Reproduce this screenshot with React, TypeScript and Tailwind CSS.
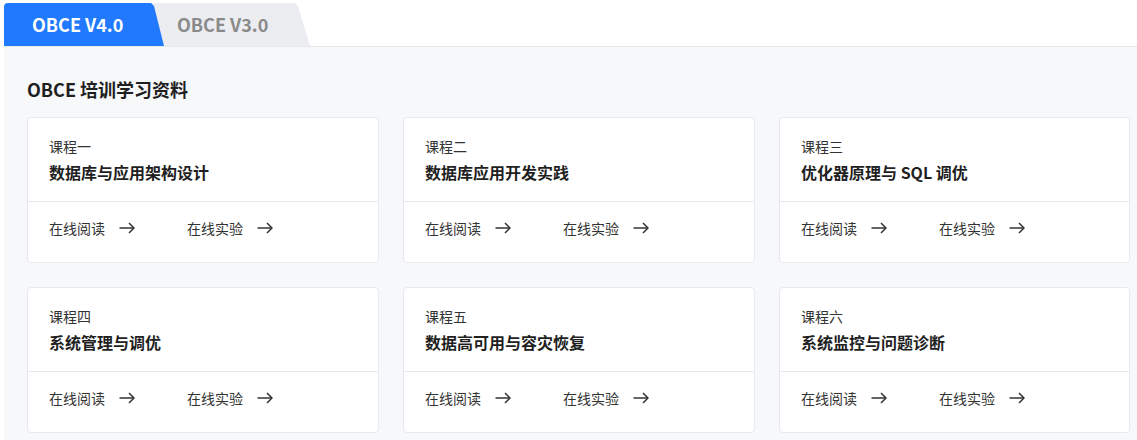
import React from 'react';

const FONT = '"Noto Sans CJK SC", "Noto Sans", sans-serif';

interface Course {
  no: string;
  title: string;
}

const COURSES: Course[] = [
  { no: '课程一', title: '数据库与应用架构设计' },
  { no: '课程二', title: '数据库应用开发实践' },
  { no: '课程三', title: '优化器原理与 SQL 调优' },
  { no: '课程四', title: '系统管理与调优' },
  { no: '课程五', title: '数据高可用与容灾恢复' },
  { no: '课程六', title: '系统监控与问题诊断' },
];

function Arrow() {
  return (
    <svg width="16" height="12" viewBox="0 0 16 12" fill="none" className="shrink-0">
      <path d="M0.5 6H15" stroke="#333" strokeWidth="1.5" />
      <path d="M10 1L15 6L10 11" stroke="#333" strokeWidth="1.5" strokeLinejoin="miter" />
    </svg>
  );
}

function CourseCard({ course }: { course: Course }) {
  return (
    <div className="h-[146px] rounded-[4px] border border-[#e8e9ee] bg-white flex flex-col">
      {/* Card head */}
      <div className="h-[84px] border-b border-[#e8e9ee] pl-[21px] pt-[18px]">
        <div className="text-[14px] leading-[20px] text-[#333]">{course.no}</div>
        <div className="mt-[4px] text-[16px] leading-[24px] font-bold text-[#1f1f1f]">{course.title}</div>
      </div>
      {/* Card links */}
      <div className="flex items-center pl-[21px] pt-[16px] text-[14px] leading-[20px] text-[#333]">
        <a className="flex items-center gap-[14px] w-[138px]">
          <span>在线阅读</span>
          <Arrow />
        </a>
        <a className="flex items-center gap-[14px]">
          <span>在线实验</span>
          <Arrow />
        </a>
      </div>
    </div>
  );
}

export default function App() {
  return (
    <div className="w-[1137px] h-[440px] overflow-hidden bg-white pt-[3px] pl-[4px]" style={{ fontFamily: FONT }}>
      {/* Tabs */}
      <div className="flex h-[43px]">
        <div className="relative z-10 w-[160px] rounded-tl-[4px] bg-[#2179fd] [clip-path:polygon(0_0,147px_0,150px_3px,100%_100%,0_100%)] flex items-center pl-[28px] text-[18px] font-bold text-white">
          OBCE V4.0
        </div>
        <div className="-ml-[14px] w-[160px] bg-[#ecedf1] [clip-path:polygon(0_0,145px_0,148px_3px,100%_100%,0_100%)] flex items-center pl-[27px] text-[18px] font-bold text-[#8a8a8a]">
          OBCE V3.0
        </div>
      </div>

      {/* Panel */}
      <div className="h-[400px] border-t border-[#e6e8ee] bg-[#f7f8fa] pl-[23px] pt-[30px]">
        <h2 className="text-[18px] leading-[24px] font-bold text-[#1f1f1f]">OBCE 培训学习资料</h2>
        <div className="mt-[16px] grid grid-cols-[352px_352px_351px] gap-x-[24px] gap-y-[24px]">
          {COURSES.map((c) => (
            <CourseCard key={c.no} course={c} />
          ))}
        </div>
      </div>
    </div>
  );
}
